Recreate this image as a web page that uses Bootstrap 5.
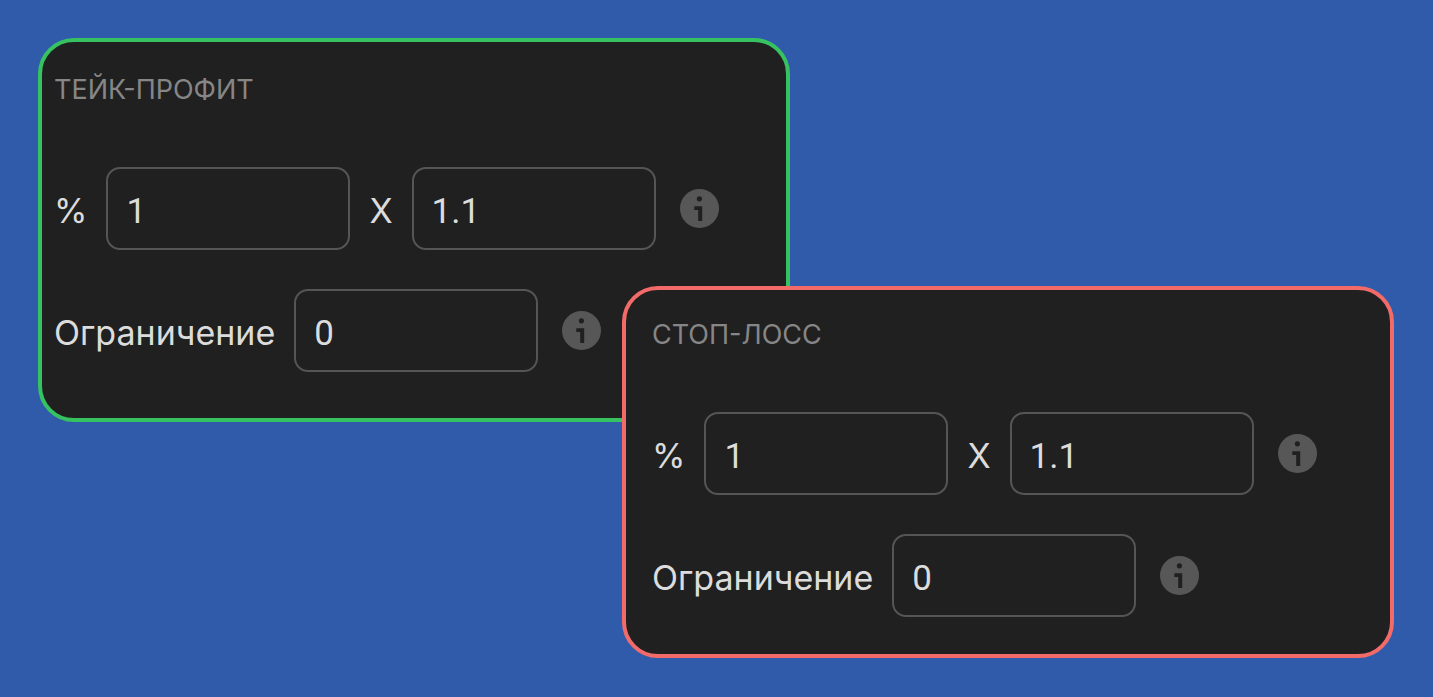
<!DOCTYPE html>
<html lang="ru">
<head>
<meta charset="utf-8">
<meta name="viewport" content="width=device-width, initial-scale=1">
<title>Тейк-профит и стоп-лосс</title>
<link href="https://cdn.jsdelivr.net/npm/bootstrap@5.3.0/dist/css/bootstrap.min.css" rel="stylesheet">
<style>
  body { background: #305aaa; font-family: Inter, "Noto Sans", sans-serif; }
  .board { display: grid; grid-template-columns: 584fr 168fr 604fr; padding: 38px 39px 38px 38px; }
  .panel { --bs-card-bg: #202020; --bs-card-border-width: 4px; --bs-card-border-radius: 36px; color: #dcdcdc; }
  .panel-profit { grid-column: 1 / 3; --bs-card-border-color: #36c261; padding: 32px 12px 46px; }
  .panel-loss { grid-column: 2 / 4; --bs-card-border-color: #f26b69; margin-top: -136px; padding: 29px 26px 37px; }
  .panel-title { color: #868686; font-size: 27px; line-height: 32px; font-weight: 400; margin-bottom: 61px; }
  .rows { gap: 39px; }
  .field-row { gap: 19px; }
  .field-row label { font-size: 34px; line-height: 40px; padding-top: 5px; }
  .field-row .form-control { width: 244px; height: 83px; padding: 5px 18px 0; font-family: Roboto, sans-serif; font-size: 35px; line-height: 40px; color: #dcdcdc; background: transparent; border: 2px solid #555; border-radius: 14px; }
  .info-btn { width: 39px; height: 39px; margin-left: 5px; }
</style>
</head>
<body>
<svg class="d-none" aria-hidden="true">
  <symbol id="info" viewBox="0 0 39 39">
    <circle cx="19.5" cy="19.5" r="19.5" fill="#575757"/>
    <circle cx="19.4" cy="9.8" r="2.6" fill="#202020"/>
    <path d="M14.3 17.3h7.9v14.8h-4V21h-3.9z" fill="#202020"/>
  </symbol>
</svg>
<main class="board">
  <section class="card panel panel-profit">
    <h2 class="panel-title">ТЕЙК-ПРОФИТ</h2>
    <div class="rows d-flex flex-column">
      <div class="field-row d-flex align-items-center">
        <label for="tp-percent">%</label>
        <input class="form-control" id="tp-percent" type="text" value="1">
        <label for="tp-x">X</label>
        <input class="form-control" id="tp-x" type="text" value="1.1">
        <button class="btn info-btn p-0 border-0 d-flex flex-shrink-0" type="button" aria-label="Справка"><svg width="39" height="39"><use href="#info"/></svg></button>
      </div>
      <div class="field-row d-flex align-items-center">
        <label for="tp-limit">Ограничение</label>
        <input class="form-control" id="tp-limit" type="text" value="0">
        <button class="btn info-btn p-0 border-0 d-flex flex-shrink-0" type="button" aria-label="Справка"><svg width="39" height="39"><use href="#info"/></svg></button>
      </div>
    </div>
  </section>
  <section class="card panel panel-loss">
    <h2 class="panel-title">СТОП-ЛОСС</h2>
    <div class="rows d-flex flex-column">
      <div class="field-row d-flex align-items-center">
        <label for="sl-percent">%</label>
        <input class="form-control" id="sl-percent" type="text" value="1">
        <label for="sl-x">X</label>
        <input class="form-control" id="sl-x" type="text" value="1.1">
        <button class="btn info-btn p-0 border-0 d-flex flex-shrink-0" type="button" aria-label="Справка"><svg width="39" height="39"><use href="#info"/></svg></button>
      </div>
      <div class="field-row d-flex align-items-center">
        <label for="sl-limit">Ограничение</label>
        <input class="form-control" id="sl-limit" type="text" value="0">
        <button class="btn info-btn p-0 border-0 d-flex flex-shrink-0" type="button" aria-label="Справка"><svg width="39" height="39"><use href="#info"/></svg></button>
      </div>
    </div>
  </section>
</main>
<script src="https://cdn.jsdelivr.net/npm/bootstrap@5.3.0/dist/js/bootstrap.bundle.min.js"></script>
</body>
</html>
